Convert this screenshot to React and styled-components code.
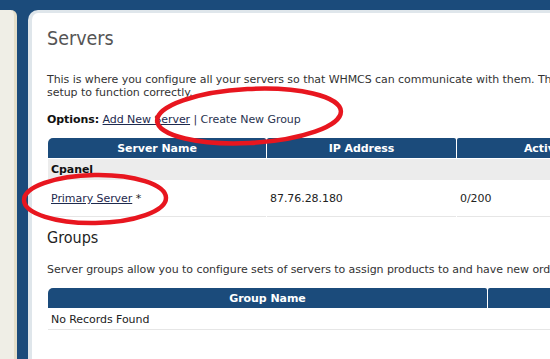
import React from 'react';
import styled, { createGlobalStyle } from 'styled-components';

const Global = createGlobalStyle`
  html, body {
    margin: 0;
    padding: 0;
    background: #1b4b7b;
    overflow: hidden;
  }
  body {
    font-family: 'DejaVu Sans', Tahoma, sans-serif;
    font-size: 11px;
    letter-spacing: -0.06px;
    color: #333;
  }
`;

const Page = styled.div`
  position: relative;
  display: flex;
  align-items: flex-start;
  gap: 11px;
  padding-top: 10px;
  width: 900px;
  height: 349px;
`;

const Sidebar = styled.div`
  width: 14px;
  height: 100%;
  background: #efeee6;
  border-right: 3px solid #e4dec9;
  border-top-right-radius: 6px;
  flex-shrink: 0;
`;

const Main = styled.div`
  flex: 1;
  height: 100%;
  background: #fff;
  border-top: 3px solid #dfe6eb;
  border-left: 4px solid #dfe6eb;
  border-top-left-radius: 10px;
  padding: 14px 0 0 15px;
  box-sizing: border-box;
`;

const Title = styled.h1`
  margin: 0;
  font-size: 19.5px;
  font-stretch: condensed;
  letter-spacing: 0;
  font-weight: normal;
  line-height: 24px;
  color: #555;
`;

const SubTitle = styled.h2`
  margin: 10px 0 0;
  font-size: 16px;
  font-stretch: condensed;
  letter-spacing: 0;
  font-weight: normal;
  line-height: 20px;
  color: #222;
`;

const Text = styled.p`
  margin: ${p => p.$mt || 0}px 0 0;
  line-height: 13px;
  white-space: nowrap;
`;

const Strong = styled.b`
  color: #111;
`;

const Link = styled.a`
  color: #1e2a4e;
  text-decoration: underline;
  cursor: pointer;
`;

const Plain = styled.span`
  color: #2a3450;
`;

const Table = styled.table`
  border-collapse: separate;
  border-spacing: 1px;
  margin: ${p => p.$mt || 0}px 0 0;
  table-layout: fixed;
`;

const Th = styled.th`
  background: #1b4b7b;
  color: #fff;
  font-weight: bold;
  height: 20px;
  padding: 0;
  text-align: center;
  border-radius: 2px 2px 0 0;
  width: ${p => p.$w}px;
  &:first-child {
    border-top-left-radius: 5px;
  }
`;

const GroupRow = styled.tr`
  background: #ececec;
`;

const GroupCell = styled.td`
  height: 21px;
  padding: 0 3px;
  font-weight: bold;
  color: #111;
`;

const Td = styled.td`
  height: ${p => p.$h || 35}px;
  padding: 0 3px;
  border-bottom: 1px solid #e6e6e6;
  color: #222;
`;

const Marks = styled.svg`
  position: absolute;
  left: 0;
  top: 0;
  pointer-events: none;
`;

export default function App() {
  return (
    <>
      <Global />
      <Page>
        <Sidebar />
        <Main>
          <Title>Servers</Title>
          <Text $mt={22}>
            This is where you configure all your servers so that WHMCS can communicate with them. The servers must be
            <br />
            setup to function correctly.
          </Text>
          <Text $mt={14}>
            <Strong>Options:</Strong> <Link>Add New Server</Link> <Plain>| Create New Group</Plain>
          </Text>
          <Table $mt={11}>
            <thead>
              <tr>
                <Th $w={218}>Server Name</Th>
                <Th $w={189}>IP Address</Th>
                <Th $w={232}>Active Accounts</Th>
              </tr>
            </thead>
            <tbody>
              <GroupRow>
                <GroupCell colSpan={3}>Cpanel</GroupCell>
              </GroupRow>
              <tr>
                <Td><Link>Primary Server</Link> *</Td>
                <Td>87.76.28.180</Td>
                <Td>0/200</Td>
              </tr>
            </tbody>
          </Table>
          <SubTitle>Groups</SubTitle>
          <Text $mt={15}>
            Server groups allow you to configure sets of servers to assign products to and have new orders automatically assigned.
          </Text>
          <Table $mt={11}>
            <thead>
              <tr>
                <Th $w={439}>Group Name</Th>
                <Th $w={200}>Servers</Th>
              </tr>
            </thead>
            <tbody>
              <tr>
                <Td $h={20} colSpan={2}>No Records Found</Td>
              </tr>
            </tbody>
          </Table>
        </Main>
        <Marks width="550" height="359" viewBox="0 0 550 359">
          <ellipse cx="249" cy="116" rx="92" ry="27" transform="rotate(-3 249 116)" fill="none" stroke="#e8161f" strokeWidth="4.5" />
          <ellipse cx="95" cy="199" rx="71" ry="24" transform="rotate(-1 95 199)" fill="none" stroke="#e8161f" strokeWidth="4.5" />
        </Marks>
      </Page>
    </>
  );
}
